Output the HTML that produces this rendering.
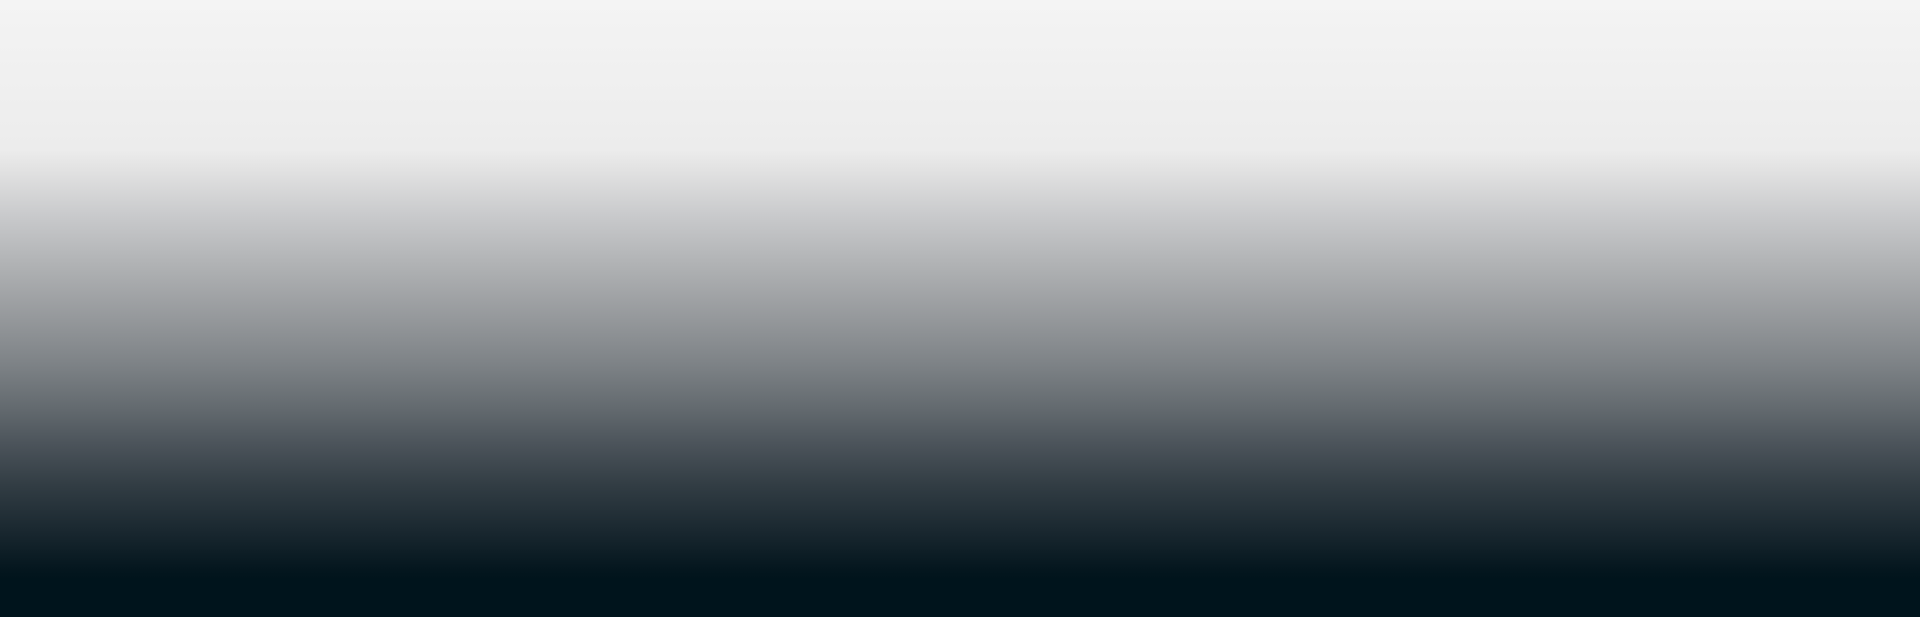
<!DOCTYPE html>
<html><head><meta charset="utf-8"><style>
html,body{margin:0;padding:0;width:1920px;height:617px;overflow:hidden}
body{background:linear-gradient(to bottom,#f4f4f4 0px,#ececec 150px,#e2e2e2 170px,#c9cacc 215px,#b0b2b4 265px,#979a9d 315px,#7d8286 365px,#62696e 410px,#4b535a 445px,#323d44 485px,#1a2830 530px,#04161e 570px,#00141c 580px,#00141c 617px)}
</style></head><body></body></html>
